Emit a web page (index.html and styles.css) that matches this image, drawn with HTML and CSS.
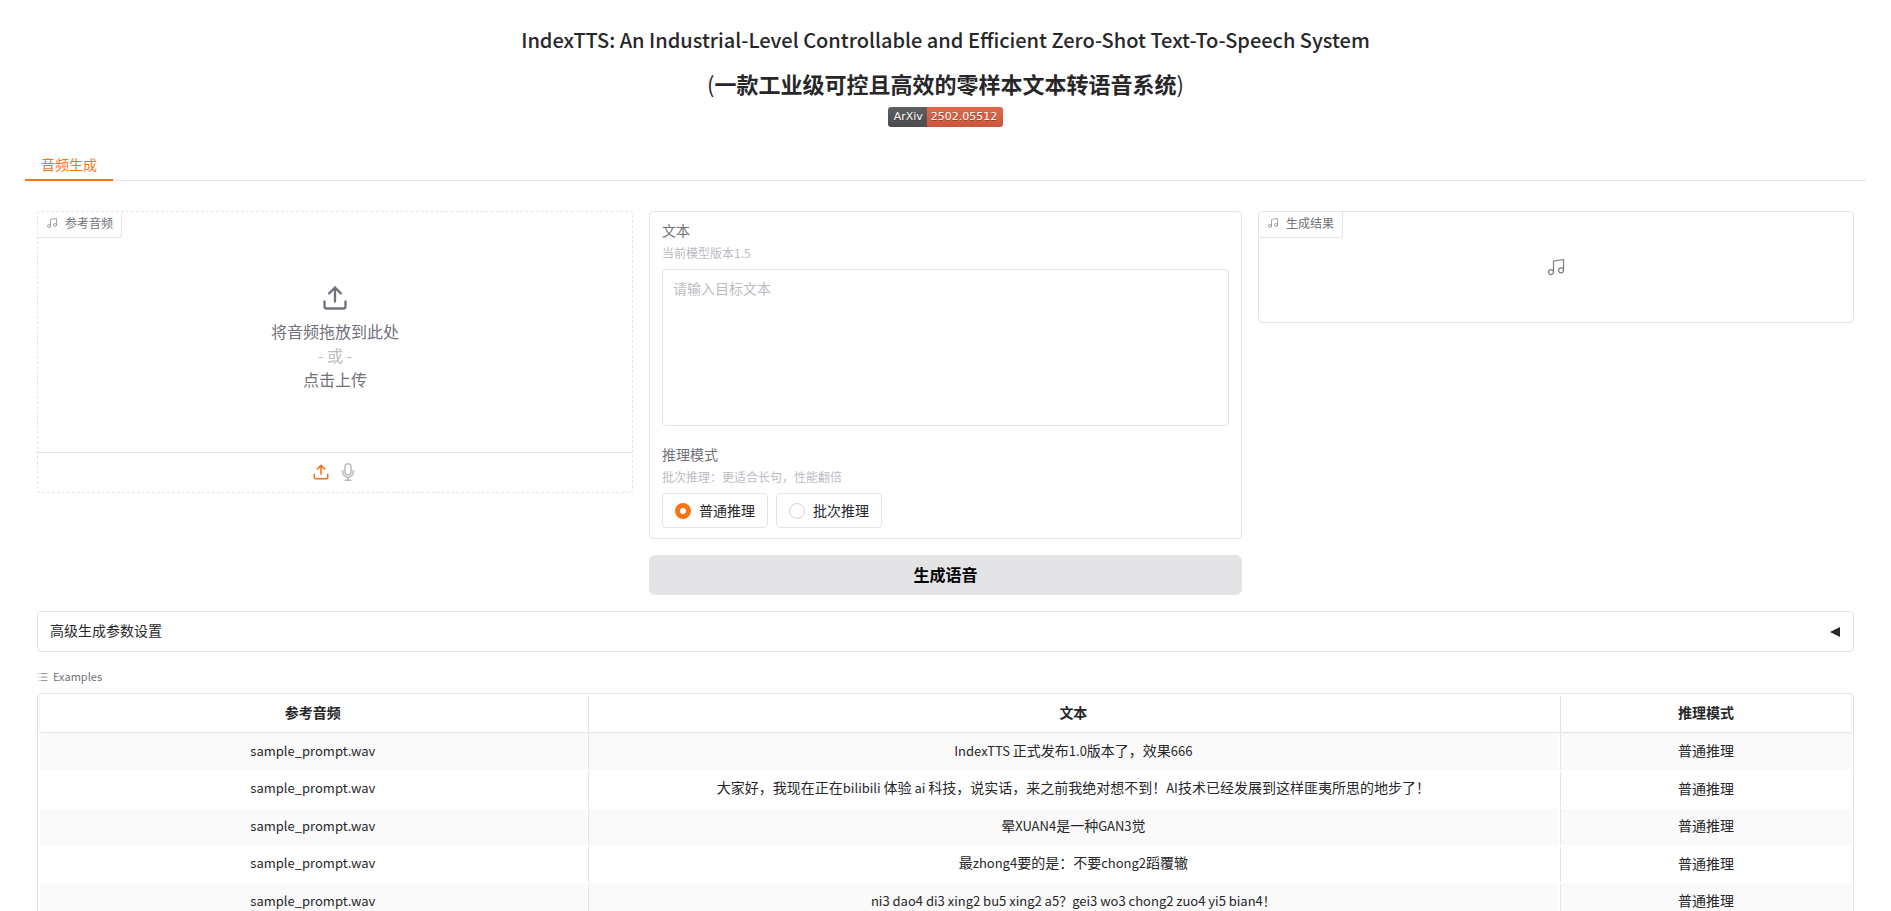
FILE: index.html
```html
<!DOCTYPE html>
<html lang="zh-CN">
<head>
<meta charset="utf-8">
<title>IndexTTS</title>
<link rel="stylesheet" href="styles.css">
</head>
<body>
<svg class="sprite" aria-hidden="true">
  <symbol id="music" viewBox="0 0 24 24"><path d="M9 18V5l12-2v13"/><circle cx="6" cy="18" r="3"/><circle cx="18" cy="16" r="3"/></symbol>
  <symbol id="upload" viewBox="0 0 24 24"><path d="M21 15v4a2 2 0 0 1-2 2H5a2 2 0 0 1-2-2v-4"/><path d="M17 8l-5-5-5 5M12 3v12"/></symbol>
</svg>
<main class="app">
  <header class="masthead">
    <h2 class="title">IndexTTS: An Industrial-Level Controllable and Efficient Zero-Shot Text-To-Speech System</h2>
    <h2 class="title title-zh"><span class="paren">(</span>一款工业级可控且高效的零样本文本转语音系统<span class="paren">)</span></h2>
    <a class="badge" href="#arxiv"><span class="badge-name">ArXiv</span><span class="badge-value">2502.05512</span></a>
  </header>
  <nav class="tabs" role="tablist"><button class="tab" type="button" role="tab" aria-selected="true">音频生成</button></nav>
  <div class="content">
    <div class="columns">
      <section class="panel panel-drop">
        <div class="block-label"><svg class="icon icon-label"><use href="#music"/></svg>参考音频</div>
        <button class="dropzone" type="button">
          <svg class="icon icon-drop"><use href="#upload"/></svg>
          <span>将音频拖放到此处</span>
          <span class="or">- 或 -</span>
          <span>点击上传</span>
        </button>
        <div class="sources">
          <button class="source active" type="button" aria-label="上传"><svg class="icon"><use href="#upload"/></svg></button>
          <button class="source" type="button" aria-label="麦克风"><svg class="icon" viewBox="0 0 24 24"><path d="M12 1a4 4 0 0 0-4 4v7a4 4 0 0 0 8 0V5a4 4 0 0 0-4-4zM19 10v2a7 7 0 0 1-14 0v-2M12 19v4M8 23h8"/></svg></button>
        </div>
      </section>
      <div class="middle">
        <section class="panel form">
          <div class="field">
            <label class="label" for="text">文本</label>
            <p class="info">当前模型版本1.5</p>
            <textarea class="textarea" id="text" placeholder="请输入目标文本"></textarea>
          </div>
          <div class="field" role="radiogroup" aria-labelledby="mode">
            <span class="label" id="mode">推理模式</span>
            <p class="info">批次推理：更适合长句，性能翻倍</p>
            <div class="choices">
              <label class="choice"><input class="radio" type="radio" name="mode" checked><span class="choice-text">普通推理</span></label>
              <label class="choice"><input class="radio" type="radio" name="mode"><span class="choice-text">批次推理</span></label>
            </div>
          </div>
        </section>
        <button class="generate" type="button">生成语音</button>
      </div>
      <section class="panel result">
        <div class="block-label"><svg class="icon icon-label"><use href="#music"/></svg>生成结果</div>
        <svg class="icon icon-empty"><use href="#music"/></svg>
      </section>
    </div>
    <button class="accordion" type="button" aria-expanded="false"><span>高级生成参数设置</span><svg class="arrow" viewBox="0 0 10 10"><path d="M0 5l10-5v10z"/></svg></button>
    <section class="examples">
      <div class="examples-label"><svg class="icon-list" viewBox="0 0 32 32"><path d="M10 6h18v2H10zM10 15h18v2H10zM10 24h18v2H10zM4 6h2v2H4zM4 15h2v2H4zM4 24h2v2H4z"/></svg>Examples</div>
      <div class="table-wrap">
        <table class="table">
          <colgroup><col class="col-audio"><col class="col-text"><col class="col-mode"></colgroup>
          <thead><tr><th>参考音频</th><th>文本</th><th>推理模式</th></tr></thead>
          <tbody>
            <tr><td><span class="latin">sample_prompt.wav</span></td><td><span class="latin">IndexTTS </span>正式发布<span class="latin">1.0</span>版本了，效果<span class="latin">666</span></td><td>普通推理</td></tr>
            <tr><td><span class="latin">sample_prompt.wav</span></td><td>大家好，我现在正在<span class="latin">bilibili </span>体验<span class="latin"> ai </span>科技，说实话，来之前我绝对想不到！<span class="latin">AI</span>技术已经发展到这样匪夷所思的地步了！</td><td>普通推理</td></tr>
            <tr><td><span class="latin">sample_prompt.wav</span></td><td>晕<span class="latin">XUAN4</span>是一种<span class="latin">GAN3</span>觉</td><td>普通推理</td></tr>
            <tr><td><span class="latin">sample_prompt.wav</span></td><td>最<span class="latin">zhong4</span>要的是：不要<span class="latin">chong2</span>蹈覆辙</td><td>普通推理</td></tr>
            <tr><td><span class="latin">sample_prompt.wav</span></td><td><span class="latin">ni3 dao4 di3 xing2 bu5 xing2 a5？gei3 wo3 chong2 zuo4 yi5 bian4！</span></td><td>普通推理</td></tr>
          </tbody>
        </table>
      </div>
    </section>
  </div>
</main>
</body>
</html>
```
FILE: styles.css
```css
:root {
  --border: #e4e4e7;
  --text: #27272a;
  --muted: #71717a;
  --faint: #bbbbc2;
  --accent: #f97316;
}
* { box-sizing: border-box; }
body {
  margin: 0;
  background: #fff;
  color: var(--text);
  font-family: "Noto Sans CJK SC", "Noto Sans", sans-serif;
  font-size: 14px;
  line-height: 20px;
}
button, textarea, input { font: inherit; color: inherit; }
button { cursor: pointer; background: none; border: 0; padding: 0; }
.sprite { display: none; }
.icon {
  fill: none;
  stroke: currentColor;
  stroke-width: 2;
  stroke-linecap: round;
  stroke-linejoin: round;
}
.app { padding: 23px 25px 0; }
.masthead { display: flex; flex-direction: column; align-items: center; }
.title { margin: 0 0 11px; font-size: 20px; font-weight: 500; line-height: 33px; text-align: center; }
.title-zh { margin-bottom: 7px; font-size: 22px; font-weight: 700; }
.paren { font-weight: 400; }
.badge {
  display: flex;
  height: 20px;
  border-radius: 3px;
  overflow: hidden;
  font-family: "DejaVu Sans", sans-serif;
  font-size: 11px;
  line-height: 20px;
  color: #fff;
  text-decoration: none;
  text-shadow: 0 1px 0 rgba(1, 1, 1, 0.3);
}
.badge-name { padding: 0 4px 0 6px; background: linear-gradient(#5f5f5f, #4b4b4b); }
.badge-value { padding: 0 6px 0 4px; background: linear-gradient(#e0674c, #c9573d); }
.tabs { display: flex; margin-top: 22px; border-bottom: 1px solid var(--border); }
.tab { height: 32px; padding: 0 16px; margin-bottom: -1px; border-bottom: 2px solid var(--accent); color: var(--accent); }
.content { display: flex; flex-direction: column; gap: 16px; padding: 30px 12px 0; }
.columns {
  display: grid;
  grid-template-columns: minmax(0, 201fr) minmax(0, 200fr) minmax(0, 201fr);
  gap: 16px;
  align-items: start;
}
.panel { position: relative; border: 1px solid var(--border); border-radius: 4px; }
.panel-drop { border-style: dashed; }
.block-label {
  position: absolute;
  top: 0;
  left: 0;
  display: flex;
  align-items: center;
  gap: 7px;
  height: 26px;
  padding: 0 8px 3px;
  border: solid var(--border);
  border-width: 0 1px 1px 0;
  border-radius: 3px 0;
  font-size: 12px;
  color: var(--muted);
}
.icon-label { width: 12px; height: 12px; opacity: 0.8; stroke-width: 1.5; }
.dropzone {
  display: flex;
  flex-direction: column;
  align-items: center;
  justify-content: center;
  width: 100%;
  height: 240px;
  padding-top: 10px;
  font-size: 16px;
  line-height: 24px;
  color: var(--muted);
}
.icon-drop { width: 28px; height: 28px; margin-bottom: 7px; }
.or { color: var(--faint); }
.sources { display: flex; justify-content: center; gap: 9px; height: 40px; padding-bottom: 1px; border-top: 1px solid var(--border); }
.source { display: flex; align-items: center; color: var(--faint); }
.source .icon { width: 18px; height: 18px; }
.source.active { color: var(--accent); }
.middle { display: flex; flex-direction: column; gap: 16px; }
.form { display: flex; flex-direction: column; gap: 18px; padding: 8px 12px 10px; }
.field { display: flex; flex-direction: column; }
.label { color: var(--muted); }
.info { margin: 4px 0 7px; font-size: 12px; line-height: 18px; color: var(--faint); }
.textarea {
  height: 157px;
  padding: 8px 10px;
  border: 1px solid var(--border);
  border-radius: 4px;
  outline: 0;
  resize: none;
}
.textarea::placeholder { color: var(--faint); }
.choices { display: flex; gap: 8px; }
.choice {
  display: flex;
  align-items: center;
  gap: 8px;
  height: 35px;
  padding: 0 12px;
  border: 1px solid var(--border);
  border-radius: 4px;
}
.choice-text { padding-bottom: 2px; }
.radio { appearance: none; width: 16px; height: 16px; margin: 0; border: 1px solid #d4d4d8; border-radius: 50%; }
.radio:checked { border: 5px solid var(--accent); }
.generate { height: 40px; padding-bottom: 2px; border-radius: 6px; background: var(--border); font-size: 16px; font-weight: 600; color: #000; }
.result { display: grid; place-items: center; height: 112px; }
.icon-empty { width: 20px; height: 20px; stroke-width: 1.5; color: #808086; }
.accordion {
  display: flex;
  align-items: center;
  justify-content: space-between;
  height: 41px;
  padding: 0 13px 0 12px;
  border: 1px solid var(--border);
  border-radius: 4px;
}
.accordion span { padding-bottom: 3px; }
.arrow { width: 10px; height: 10px; fill: var(--text); }
.examples-label { display: flex; align-items: center; gap: 4px; margin-bottom: 8px; font-size: 11px; line-height: 17px; color: var(--muted); }
.icon-list { width: 12px; height: 12px; fill: currentColor; }
.table-wrap { border: 1px solid var(--border); border-radius: 4px; }
.table { width: 100%; table-layout: fixed; border-collapse: separate; border-spacing: 2px; }
.col-audio { width: 30.2%; }
.col-text { width: 53.7%; }
.col-mode { width: 16.1%; }
.table th, .table td { height: 36px; padding: 0 8px 4px; text-align: center; }
.table th { font-weight: 700; }
.latin { font-size: 13px; }
.table th + th, .table td + td { border-left: 1px solid var(--border); }
.table thead tr { box-shadow: 0 1px 2px rgba(0, 0, 0, 0.14); }
.table tbody tr:nth-child(odd) { background: #fafafa; }
.table tbody tr:nth-child(even) td { height: 35px; }
```
